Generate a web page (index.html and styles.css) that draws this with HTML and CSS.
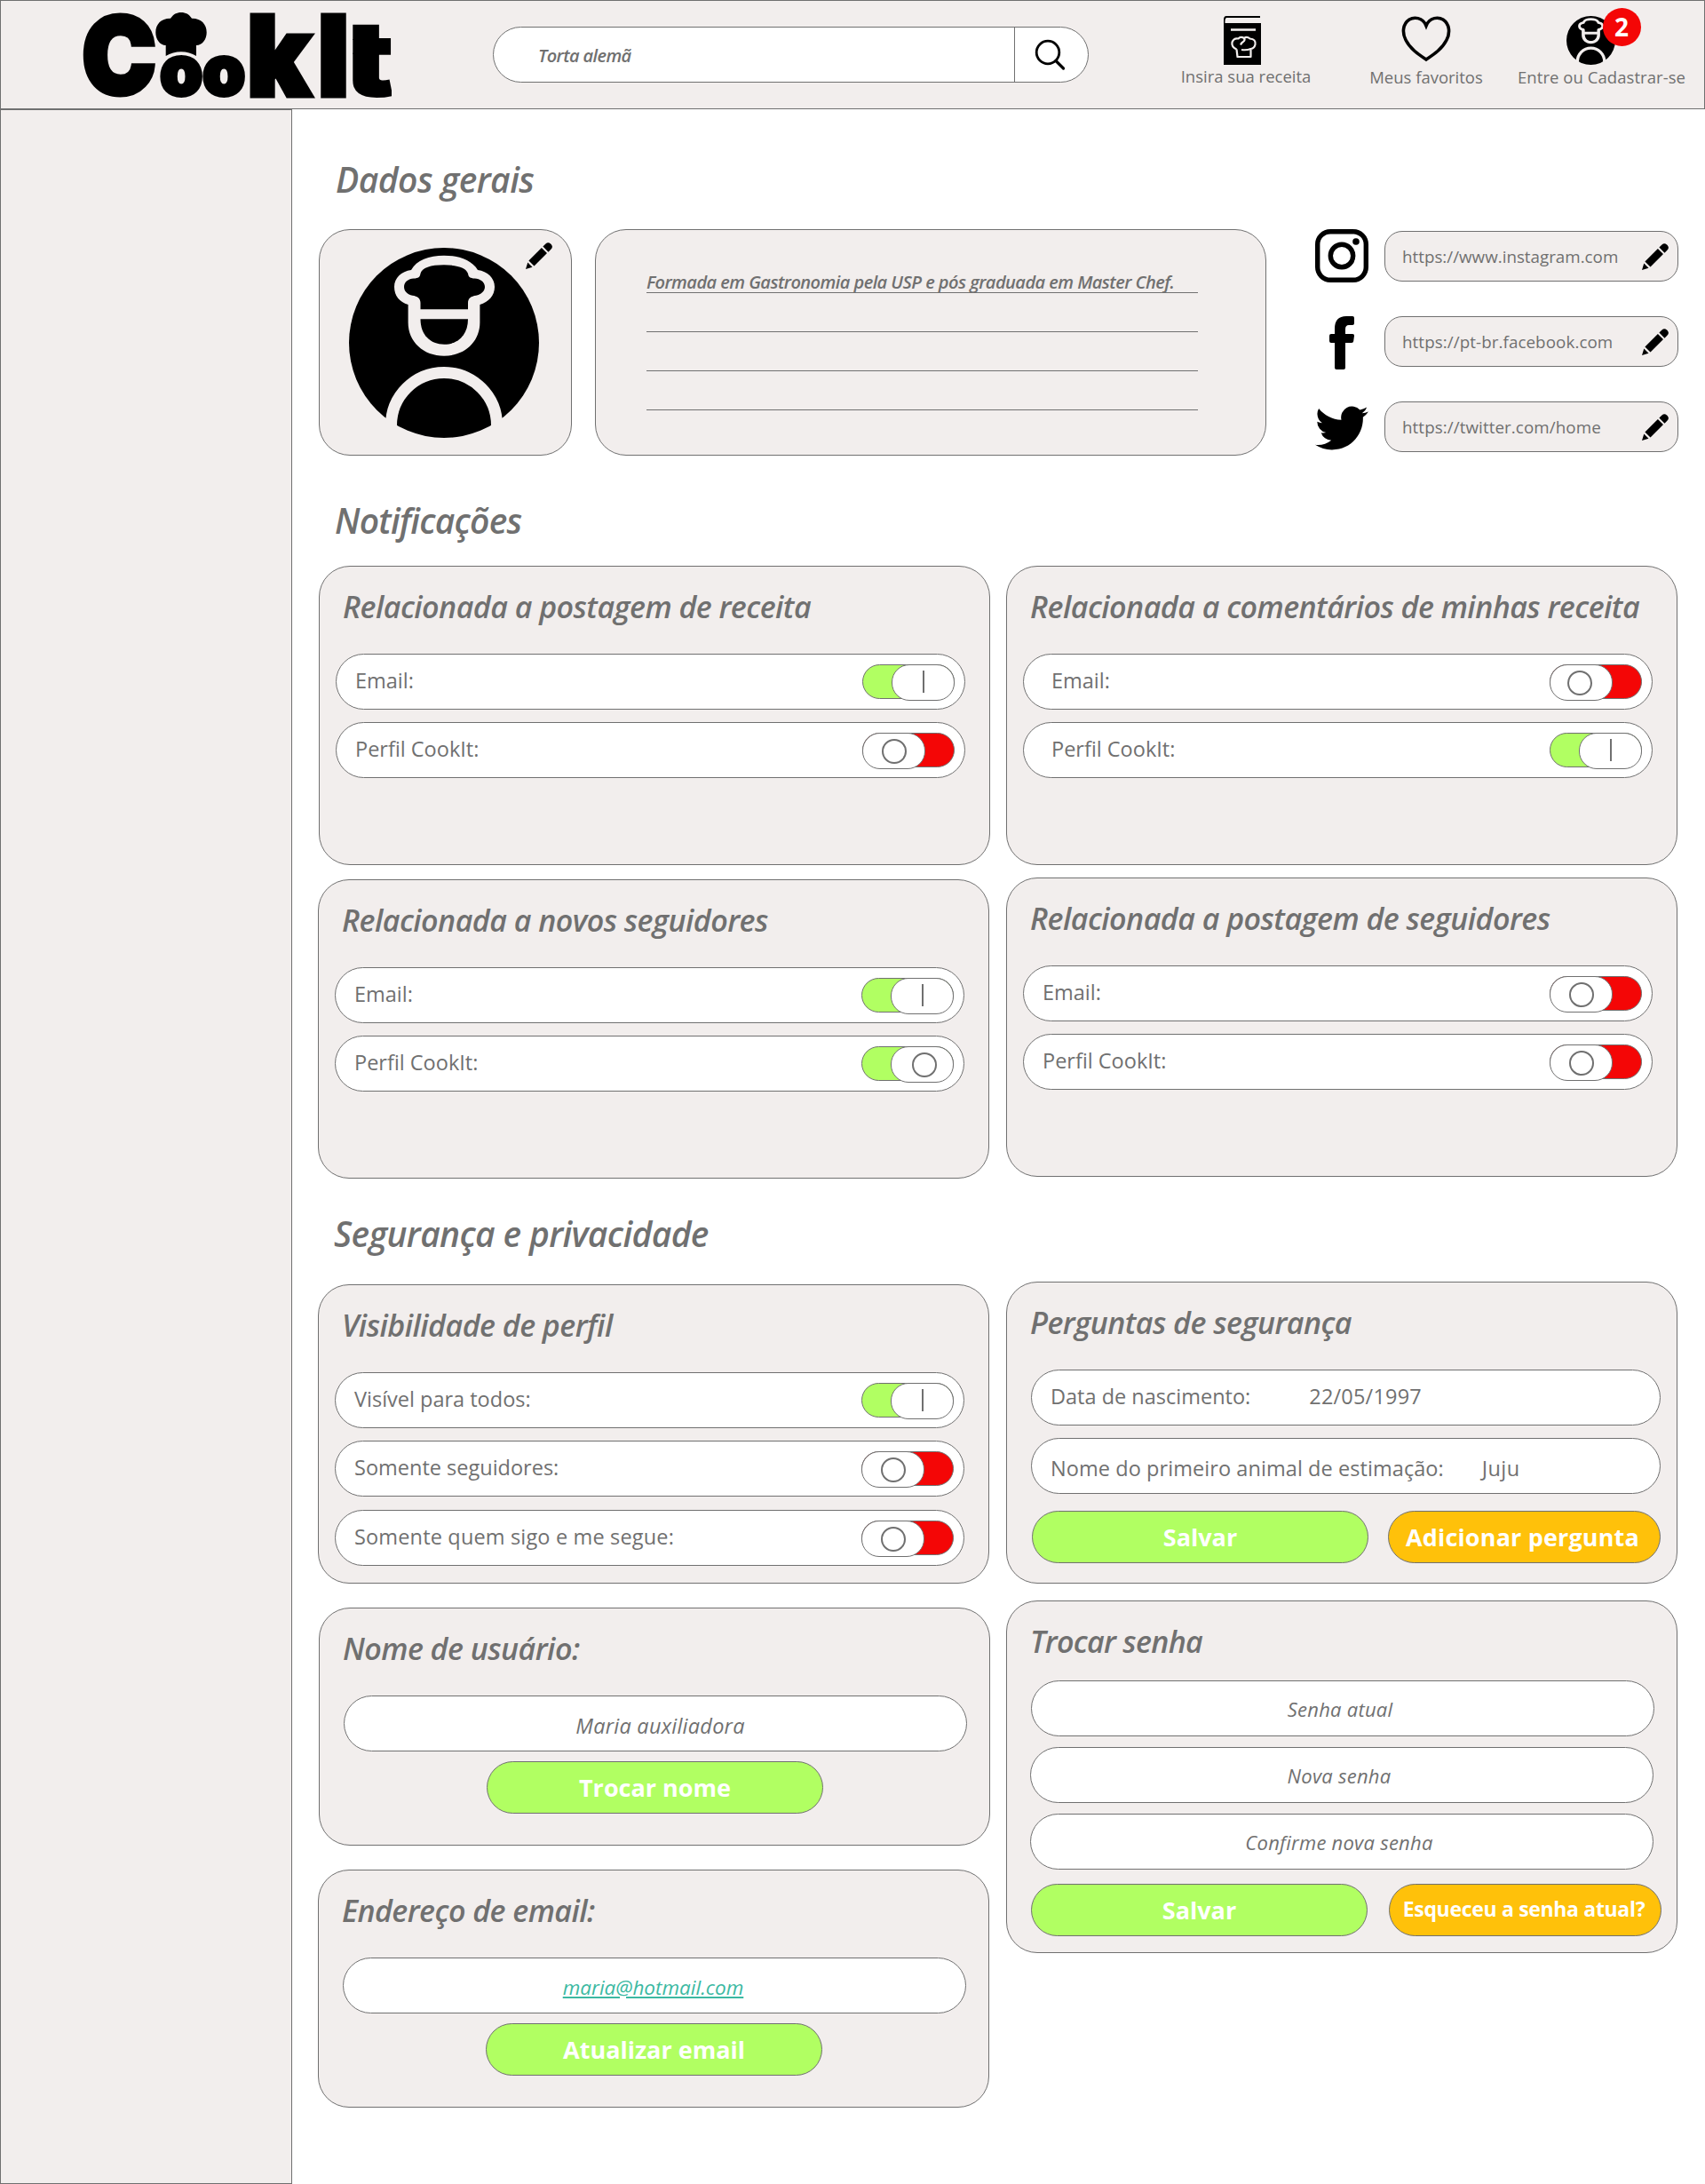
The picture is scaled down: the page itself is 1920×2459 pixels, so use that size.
FILE: index.html
```html
<!DOCTYPE html>
<html lang="pt-BR">
<head>
<meta charset="utf-8">
<title>CookIt - Configurações</title>
<link rel="stylesheet" href="styles.css">
</head>
<body>
<svg class="defs" width="0" height="0" aria-hidden="true">
  <symbol id="chef" viewBox="0 0 214 214">
    <circle cx="107" cy="107" r="107" fill="#000"/>
    <path class="paper" d="M66.6 64C57 61 51 54 51 44C51 34 59 26.500 70 25C76 14 90 8.700 107 8.700S138 14 145 25C156 26.500 164 34 164 44C164 54 157 61 147.400 64V84C147.400 106 130 121.700 107 121.700S66.600 106 66.600 84Z"/>
    <path d="M80.500 69.300V62C80.500 57 77 54.500 71.500 53.800C66 52.500 62 49 62 44C62 38.500 67 35 73 34.600C78 34.200 80 33 80.500 29C82 22.500 92 19.300 107 19.300S132 22.500 134 29C134.500 33 136.500 34.200 141.500 34.600C147.500 35 153 38.500 153 44C153 49 148.500 52.500 143 53.800C137.500 54.500 134 57 134 62V69.300Z"/>
    <path d="M80.500 80.300H134C134 98 123 108.700 107.200 108.700S80.500 98 80.500 80.300Z"/>
    <path class="paper-line" d="M47.500 206V200A59.500 59.500 0 0 1 166.500 200V206"/>
  </symbol>
  <symbol id="pencil" viewBox="0 0 30 30">
    <path d="M22.500 1.500a4 4 0 0 1 5.500 0l.6.6a4 4 0 0 1 0 5.500L25.500 10.700L19.400 4.600ZM17.900 6L24 12.100L9.500 26.600L3.400 20.500ZM2.300 22.600L7.500 27.800L0 30Z"/>
  </symbol>
</svg>

<header class="topbar">
  <svg class="logo" width="350" height="100" viewBox="92 12 350 100" role="img" aria-label="CookIt">
    <clipPath id="t-edge"><rect x="397.300" y="0" width="43.700" height="120"/></clipPath>
    <g class="logo-type">
      <text class="heavy" transform="translate(92.200 106) scale(.925 1)" font-size="121">C</text>
      <text transform="translate(180 107) scale(.99 1)" font-size="78">o</text>
      <text transform="translate(228 107) scale(.99 1)" font-size="78">o</text>
      <text class="heavy" transform="translate(278 107.500) scale(.953 1)" font-size="125">k</text>
      <text class="heavy" transform="translate(358 107.500) scale(.962 1)" font-size="125">I</text>
      <g clip-path="url(#t-edge)"><text class="thin" transform="translate(387 107.500) scale(1.2 1)" font-size="117">t</text></g>
    </g>
    <path d="M186.700 63V51C180 51 175.300 44 175.300 36.500C175.300 27 182 20.500 192 20.800C195 16 199 14 204 14S213 16 216 20.800C226 20.500 232.700 27 232.700 36.500C232.700 44 228 51 221 51V63C211 56.500 197 56.500 186.700 63Z"/>
  </svg>
  <div class="search">
    <span class="search-text">Torta alemã</span>
    <button class="search-btn" aria-label="Buscar">
      <svg width="36" height="36" viewBox="0 0 36 36"><circle cx="15" cy="15" r="12.800" fill="none" stroke="#000" stroke-width="2.800"/><path d="M24 24.500L32.500 33" stroke="#000" stroke-width="3.200" stroke-linecap="round"/></svg>
    </button>
  </div>
  <nav class="nav">
    <a class="nav-item recipe">
      <svg width="42" height="55" viewBox="0 0 42 55"><path d="M3 0H41V2H4C2 2 1.500 3.500 1.500 8H42V55H0V4Q0 0 3 0Z"/><path d="M8 15.500H36" stroke="#f2eeed" stroke-width="2.600"/><path d="M14.500 37.500Q8.500 35 9.500 29.500Q11.500 24.500 16.500 25.500Q19 22.500 23 25Q26 22.500 29.500 25.500Q36.500 26 35.500 32Q34.500 36.500 30.500 37L30.500 46H15.500L14.500 37.500M30.500 37Q26 38.800 20 38M23 25Q24.500 27 22 29Q20 30 19 32.500" fill="none" stroke="#f2eeed" stroke-width="2.200" stroke-linejoin="round"/></svg>
      <span>Insira sua receita</span>
    </a>
    <a class="nav-item fav">
      <svg width="56" height="52" viewBox="0 0 56 52"><path d="M28 11C24 1 14 1 9 4C1.500 9 .8 19 5 27C10 37 19 43 28 49C37 43 46 37 51 27C55.200 19 54.500 9 47 4C42 1 32 1 28 11Z" fill="none" stroke="#000" stroke-width="3.600"/></svg>
      <span>Meus favoritos</span>
    </a>
    <a class="nav-item account">
      <span class="account-icon"><svg width="55" height="55"><use href="#chef"/></svg><b class="badge">2</b></span>
      <span>Entre ou Cadastrar-se</span>
    </a>
  </nav>
</header>

<div class="layout">
  <aside class="sidebar"></aside>
  <main class="content">
    <h1 class="section general">Dados gerais</h1>
    <div class="profile">
      <div class="card photo">
        <svg width="214" height="214"><use href="#chef"/></svg>
        <svg class="pencil photo-edit" width="30" height="30"><use href="#pencil"/></svg>
      </div>
      <div class="card bio">
        <p class="line">Formada em Gastronomia pela USP e pós graduada em Master Chef.</p>
        <p class="line"></p>
        <p class="line"></p>
        <p class="line"></p>
      </div>
      <div class="socials">
        <div class="social">
          <svg width="60" height="60" viewBox="0 0 60 60" fill="none" stroke="#000"><rect x="2.700" y="2.700" width="54.600" height="54.600" rx="14.500" stroke-width="5.400"/><circle cx="30" cy="30" r="12.700" stroke-width="5.400"/><circle cx="46" cy="14" r="3.800" fill="#000" stroke="none"/></svg>
          <div class="url"><span>https://www.instagram.com</span><svg class="pencil" width="30" height="30"><use href="#pencil"/></svg></div>
        </div>
        <div class="social">
          <svg width="60" height="60" viewBox="0 0 60 60"><path d="M22 58V30H18Q16 30 16 28V22Q16 20 18 20H22V14Q22 0 35 0H42Q44 0 44 2V8Q44 10 42 10H38Q34 10 34 14.500V20H42Q44.300 20 44 22L43.200 28Q43 30 41 30H34V58Q34 60 32 60H24Q22 60 22 58Z"/></svg>
          <div class="url"><span>https://pt-br.facebook.com</span><svg class="pencil" width="30" height="30"><use href="#pencil"/></svg></div>
        </div>
        <div class="social">
          <svg width="60" height="60" viewBox="0 0 24 24"><path d="M23.950 4.570a10 10 0 0 1-2.820.77 4.960 4.960 0 0 0 2.160-2.720c-.95.550-2 .950-3.120 1.180a4.920 4.920 0 0 0-8.380 4.480C7.690 8.090 4.070 6.130 1.640 3.160a4.820 4.820 0 0 0-.67 2.480c0 1.710.87 3.210 2.190 4.090a4.900 4.900 0 0 1-2.230-.61v.06a4.920 4.920 0 0 0 3.950 4.830 5 5 0 0 1-2.210.08 4.940 4.940 0 0 0 4.600 3.420A9.870 9.870 0 0 1 0 19.540a13.990 13.990 0 0 0 7.550 2.210c9.050 0 14-7.500 14-13.980 0-.210 0-.420-.02-.63a9.940 9.940 0 0 0 2.460-2.550z"/></svg>
          <div class="url"><span>https://twitter.com/home</span><svg class="pencil" width="30" height="30"><use href="#pencil"/></svg></div>
        </div>
      </div>
    </div>

    <h1 class="section notifications">Notificações</h1>
    <div class="columns">
      <div class="col">
        <section class="card notice">
          <h2>Relacionada a postagem de receita</h2>
          <div class="row"><span>Email:</span><i class="toggle on"></i></div>
          <div class="row"><span>Perfil CookIt:</span><i class="toggle off"></i></div>
        </section>
        <section class="card notice shifted">
          <h2>Relacionada a novos seguidores</h2>
          <div class="row"><span>Email:</span><i class="toggle on"></i></div>
          <div class="row"><span>Perfil CookIt:</span><i class="toggle on ring"></i></div>
        </section>
      </div>
      <div class="col">
        <section class="card notice indented">
          <h2>Relacionada a comentários de minhas receita</h2>
          <div class="row"><span>Email:</span><i class="toggle off"></i></div>
          <div class="row"><span>Perfil CookIt:</span><i class="toggle on"></i></div>
        </section>
        <section class="card notice followers">
          <h2>Relacionada a postagem de seguidores</h2>
          <div class="row"><span>Email:</span><i class="toggle off"></i></div>
          <div class="row"><span>Perfil CookIt:</span><i class="toggle off"></i></div>
        </section>
      </div>
    </div>

    <h1 class="section security">Segurança e privacidade</h1>
    <div class="columns">
      <div class="col lower">
        <section class="card notice shifted">
          <h2>Visibilidade de perfil</h2>
          <div class="row"><span>Visível para todos:</span><i class="toggle on"></i></div>
          <div class="row"><span>Somente seguidores:</span><i class="toggle off"></i></div>
          <div class="row last"><span>Somente quem sigo e me segue:</span><i class="toggle off"></i></div>
        </section>
        <section class="card account-form">
          <h2>Nome de usuário:</h2>
          <div class="field name"><span>Maria auxiliadora</span></div>
          <button class="btn save">Trocar nome</button>
        </section>
        <section class="card account-form shifted">
          <h2>Endereço de email:</h2>
          <div class="field address"><a class="mail">maria@hotmail.com</a></div>
          <button class="btn save">Atualizar email</button>
        </section>
      </div>
      <div class="col">
        <section class="card questions">
          <h2>Perguntas de segurança</h2>
          <div class="row birth"><span>Data de nascimento:</span><span class="answer">22/05/1997</span></div>
          <div class="row pet"><span>Nome do primeiro animal de estimação:</span><span class="answer">Juju</span></div>
          <div class="actions"><button class="btn save">Salvar</button><button class="btn extra">Adicionar pergunta</button></div>
        </section>
        <section class="card password">
          <h2>Trocar senha</h2>
          <div class="field"><span>Senha atual</span></div>
          <div class="field"><span>Nova senha</span></div>
          <div class="field"><span>Confirme nova senha</span></div>
          <div class="actions"><button class="btn save">Salvar</button><button class="btn extra forgot">Esqueceu a senha atual?</button></div>
        </section>
      </div>
    </div>
  </main>
</div>
</body>
</html>
```
FILE: styles.css
```css
:root {
  --line: #707070;
  --panel: #f2eeed;
  --green: #b1ff62;
  --red: #f40606;
  --amber: #ffc10a;
}

* { box-sizing: border-box; }

body {
  margin: 0;
  background: #fff;
  color: var(--line);
  font-family: "Open Sans", "Noto Sans", sans-serif;
}

h1, h2, p { margin: 0; }
h1, h2, p, span, button { white-space: nowrap; }
button { font: inherit; color: inherit; padding: 0; }
.defs { display: block; position: absolute; }
.paper { fill: var(--panel); }
.paper-line { fill: none; stroke: var(--panel); stroke-width: 13; }

/* Top bar */
.topbar {
  display: flex;
  height: 123px;
  border: 1px solid var(--line);
  background: var(--panel);
}
.logo { flex: none; margin: 11px 0 0 91px; overflow: visible; }
.logo-type { font-family: Inter, sans-serif; font-weight: 900; stroke: #000; stroke-width: 4; }
.logo-type .heavy { stroke-width: 5; }
.logo-type .thin { stroke-width: 2; }
.search {
  display: flex;
  align-items: center;
  width: 671px;
  height: 63px;
  margin: 29px 0 0 113px;
  border: 1px solid var(--line);
  border-radius: 32px;
  background: #fff;
}
.search-text {
  flex: 1;
  padding: 2px 0 0 50px;
  font-size: 20px;
  font-weight: 600;
  font-style: italic;
  letter-spacing: -.6px;
}
.search-btn {
  width: 83px;
  height: 61px;
  padding: 5px 0 0 22px;
  border: 0;
  border-left: 1px solid var(--line);
  background: none;
  text-align: left;
}
.nav { display: flex; margin-left: 90px; }
.nav-item {
  display: flex;
  flex: none;
  flex-direction: column;
  align-items: center;
  font-size: 18.500px;
  line-height: 26px;
}
.recipe { width: 174px; padding-top: 17px; }
.recipe svg { margin-right: 9px; }
.fav { width: 128px; margin-left: 52px; padding-top: 17px; }
.fav svg { margin-bottom: 4px; }
.account { width: 189px; margin-left: 39px; padding-top: 17px; letter-spacing: .06px; }
.account-icon { position: relative; height: 56px; margin-right: 25px; }
.badge {
  position: absolute;
  left: 41px;
  top: -9px;
  width: 43px;
  height: 43px;
  border-radius: 50%;
  background: var(--red);
  color: #fff;
  font-size: 28px;
  font-weight: 700;
  line-height: 43px;
  text-align: center;
}

/* Page frame */
.layout { display: flex; height: 2336px; }
.sidebar {
  flex: none;
  width: 329px;
  border: 1px solid var(--line);
  background: var(--panel);
}
.content { flex: 1; padding-left: 30px; }

.section {
  padding-left: 19px;
  font-size: 39px;
  font-weight: 600;
  font-style: italic;
  letter-spacing: -.65px;
  line-height: 77px;
}
.general { height: 135px; padding-top: 40px; letter-spacing: -.55px; }
.notifications { height: 124px; padding-top: 34px; padding-left: 18px; letter-spacing: -.8px; }
.security { height: 116px; padding-top: 23px; padding-left: 17px; }

.card {
  border: 1px solid var(--line);
  border-radius: 35px;
  background: var(--panel);
}

/* Profile */
.profile { display: flex; height: 255px; }
.photo { position: relative; width: 285px; padding: 20px 0 0 33px; }
.photo-edit { position: absolute; right: 21px; top: 14px; }
.bio { width: 756px; margin-left: 26px; padding: 27px 76px 0 57px; }
.line {
  height: 44px;
  border-bottom: 1px solid var(--line);
  font-size: 20px;
  font-weight: 600;
  font-style: italic;
  letter-spacing: -.54px;
  line-height: 64px;
}
.socials { margin-left: 55px; }
.social { display: flex; align-items: flex-start; height: 98px; gap: 18px; }
.social + .social { height: 96px; }
.url {
  display: flex;
  align-items: center;
  justify-content: space-between;
  width: 331px;
  height: 57px;
  margin-top: 2px;
  padding: 0 10px 0 19px;
  border: 1px solid var(--line);
  border-radius: 20px;
  background: var(--panel);
  font-size: 18.800px;
}
.social + .social .url { margin-top: 0; letter-spacing: .08px; }

/* Two column card area */
.columns { display: flex; gap: 18px; }
.col { display: flex; flex-direction: column; width: 756px; }
.lower { padding-top: 3px; }
.card h2 {
  height: 98px;
  padding-left: 26px;
  font-size: 34px;
  font-weight: 600;
  font-style: italic;
  letter-spacing: -.54px;
  line-height: 91px;
}
.notice { height: 337px; }
.shifted { position: relative; left: -1px; margin-top: 16px; }
.lower .notice { margin-top: 0; }
.followers { margin-top: 14px; }
.row {
  display: flex;
  align-items: center;
  justify-content: space-between;
  width: 709px;
  height: 63px;
  margin: 0 0 14px 18px;
  padding: 0 11px 0 21px;
  border: 1px solid var(--line);
  border-radius: 32px;
  background: #fff;
  font-size: 23.500px;
}
.row span { padding-bottom: 3px; }
.last { margin-top: 15px; letter-spacing: .16px; }
.indented .row { padding-left: 31px; }

/* Switches */
.toggle {
  position: relative;
  width: 104px;
  height: 39px;
  border: 1px solid var(--line);
  border-radius: 20px;
}
.toggle.on { background: var(--green); }
.toggle.off { background: var(--red); }
.toggle::before {
  content: "";
  position: absolute;
  top: -1px;
  width: 69px;
  height: 39px;
  border: 1px solid var(--line);
  border-radius: 20px;
  background: #fff;
}
.toggle.on::before { right: -1px; }
.toggle.off::before { left: -1px; }
.toggle::after { content: ""; position: absolute; }
.toggle.on::after { right: 33px; top: 6px; width: 2px; height: 25px; background: var(--line); }
.toggle.off::after, .toggle.ring::after {
  left: 21px;
  top: 6px;
  width: 24px;
  height: 24px;
  border: 2px solid var(--line);
  border-radius: 50%;
  background: none;
}
.toggle.ring::after { left: 56px; }
.indented .toggle.off::after { left: 19px; }

/* Forms */
.field {
  display: flex;
  align-items: center;
  justify-content: center;
  width: 702px;
  height: 63px;
  margin-left: 27px;
  border: 1px solid var(--line);
  border-radius: 32px;
  background: #fff;
  font-size: 22px;
  font-style: italic;
}
.mail { color: #3cb9a2; text-decoration: underline; font-size: 22.500px; }
.btn {
  width: 379px;
  height: 59px;
  border: 1px solid var(--line);
  border-radius: 30px;
  color: #fff;
  font-size: 27px;
  font-weight: 700;
}
.save { background: var(--green); }
.extra { width: 307px; padding: 0 4px 1px 0; background: var(--amber); letter-spacing: .15px; }
.account-form { height: 268px; margin-top: 27px; }
.account-form .field { padding-top: 4px; font-size: 23.500px; }
.account-form .name { padding-left: 11px; letter-spacing: .25px; }
.account-form .address { padding: 3px 3px 0 0; }
.account-form .btn { display: block; margin: 11px auto 0 188px; }
.questions { height: 340px; }
.questions .row { justify-content: flex-start; margin-left: 27px; }
.birth .answer { margin-left: 66px; letter-spacing: .2px; }
.pet { padding-top: 8px; letter-spacing: .07px; }
.pet .answer { margin-left: 43px; letter-spacing: .4px; }
.actions {
  display: flex;
  justify-content: space-between;
  width: 708px;
  margin-left: 28px;
  padding-top: 5px;
}
.password { height: 397px; margin-top: 19px; }
.password h2 { height: 89px; letter-spacing: -.7px; }
.password .field { padding-right: 6px; letter-spacing: .25px; }
.password .field + .field { margin: 12px 0 0 26px; }
.password .actions { width: 710px; margin-left: 27px; padding-top: 16px; }
.forgot { padding: 0 3px 3px 0; font-size: 23px; letter-spacing: -.32px; }
```
